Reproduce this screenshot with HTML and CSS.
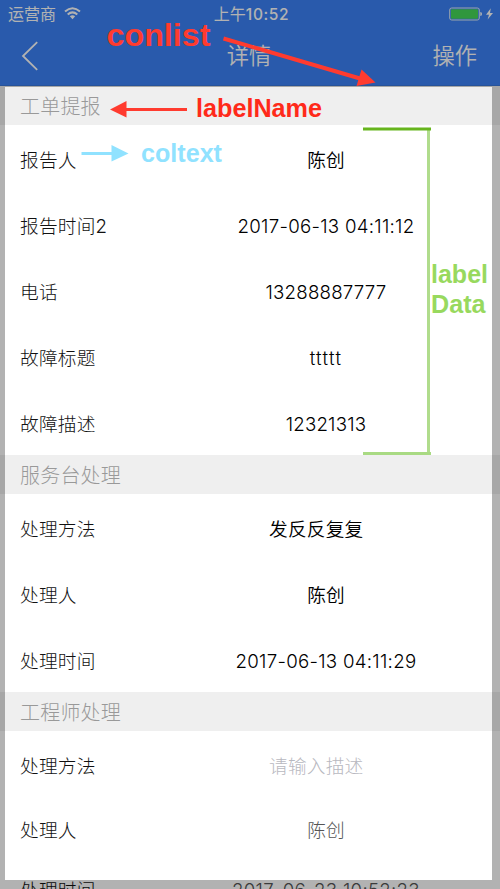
FILE: index.html
```html
<!DOCTYPE html>
<html lang="zh-CN">
<head>
<meta charset="utf-8">
<title>详情</title>
<link rel="stylesheet" href="styles.css">
</head>
<body>
<div class="screen">
  <header class="header">
    <div class="status">
      <div class="carrier"><span>运营商</span>
        <svg width="17" height="13" viewBox="0 0 17 13" fill="none" stroke="#fff" stroke-width="2"><path d="M1 4.6Q8.5-2 16 4.6M3.7 7.5Q8.5 3.2 13.3 7.5"/><path d="M5.8 9.3Q8.5 7.2 11.2 9.3L8.5 12.3Z" fill="#fff" stroke="none"/></svg>
      </div>
      <div class="clock">上午<span>10:52</span></div>
      <svg class="battery" width="46" height="14" viewBox="0 0 46 14"><rect x=".7" y="1" width="29.6" height="12" rx="2" fill="none" stroke="#e0edf8" stroke-width="1"/><rect x="2" y="2.2" width="27" height="9.6" rx=".8" fill="#45d958"/><path d="M31.3 5Q33 5.2 33 7T31.3 9Z" fill="#fff"/><path d="M41.8 1.3L37 7.7H40L38.6 12.5L44 6H41Z" fill="#fff"/></svg>
    </div>
    <nav class="nav">
      <svg class="back" width="18" height="30" viewBox="0 0 18 30" fill="none" stroke="#fff" stroke-width="1.8"><path d="M16.2 1.2L2 15L16.2 28.8"/></svg>
      <h1>详情</h1>
      <span class="action">操作</span>
    </nav>
  </header>
  <main>
    <section class="report">
      <h2>工单提报</h2>
      <div class="row"><span>报告人</span><b>陈创</b></div>
      <div class="row"><span>报告时间2</span><b class="date">2017-06-13 04:11:12</b></div>
      <div class="row"><span>电话</span><b class="phone">13288887777</b></div>
      <div class="row"><span>故障标题</span><b class="fault">ttttt</b></div>
      <div class="row"><span>故障描述</span><b class="desc">12321313</b></div>
    </section>
    <section class="desk">
      <h2>服务台处理</h2>
      <div class="row"><span>处理方法</span><b class="method">发反反复复</b></div>
      <div class="row"><span>处理人</span><b>陈创</b></div>
      <div class="row"><span>处理时间</span><b class="date">2017-06-13 04:11:29</b></div>
    </section>
    <section class="engineer">
      <h2>工程师处理</h2>
      <div class="row"><span>处理方法</span><b class="method placeholder">请输入描述</b></div>
      <div class="row"><span>处理人</span><b class="readonly">陈创</b></div>
      <div class="row last"><span>处理时间</span><b class="readonly date">2017-06-23 10:52:23</b></div>
    </section>
  </main>
  <div class="spotlight"></div>
  <svg class="notes" width="500" height="889" viewBox="0 0 500 889">
    <g fill="#ff3b2f" stroke="none">
      <path d="M223.5 38.5L360 78.5" stroke="#ff3b2f" stroke-width="4"/><path d="M361.5 69.5L375.5 82.5L356.5 86Z"/>
      <path d="M124 109.5H187" stroke="#ff3b2f" stroke-width="3"/><path d="M110 109.5L126.5 101V117.5Z"/>
      <text x="106.5" y="46" font-size="32" textLength="104" lengthAdjust="spacingAndGlyphs">conlist</text>
    </g>
    <text x="196" y="116.5" font-size="25" fill="#ff2a1a" textLength="126" lengthAdjust="spacingAndGlyphs">labelName</text>
    <g fill="#90e2ff"><path d="M81.5 153.5H113" stroke="#90e2ff" stroke-width="3"/><path d="M128.5 153.5L111.5 145V161.5Z"/><text x="141" y="162" font-size="25" textLength="81" lengthAdjust="spacingAndGlyphs">coltext</text></g>
    <path d="M428.5 128V453" stroke="#b0dc8c" stroke-width="3"/>
    <path d="M363 129H431" stroke="#67b51e" stroke-width="3"/>
    <path d="M363 453.5H431" stroke="#a9da83" stroke-width="3"/>
    <g fill="#98d95e" font-size="25"><text x="431" y="282.5" textLength="57" lengthAdjust="spacingAndGlyphs">label</text><text x="431" y="312.5" textLength="54.5" lengthAdjust="spacingAndGlyphs">Data</text></g>
  </svg>
</div>
</body>
</html>
```
FILE: styles.css
```css
* { box-sizing: border-box; }
body { margin: 0; background: #fff; font-family: Inter, "Noto Sans CJK SC", sans-serif; }
.screen { position: relative; width: 500px; height: 889px; overflow: hidden; }
.header { height: 86px; background: #3b82f6; border-bottom: 1px solid #3977dc; color: #fff; }
.status { display: grid; grid-template-columns: 1fr auto 1fr; align-items: center; height: 27px; padding: 0 5px 0 8px; font-size: 16px; }
.carrier { display: flex; align-items: center; gap: 8px; line-height: 22px; }
.carrier span { padding-top: 1px; }
.clock { padding-top: 1px; font-size: 16px; line-height: 22px; }
.clock span { font-size: 15.5px; font-weight: 500; letter-spacing: .6px; }
.battery { justify-self: end; }
.nav { display: grid; grid-template-columns: 1fr auto 1fr; align-items: center; height: 57px; padding: 0 23px 0 21px; }
.nav h1, .action { margin: 0; padding-top: 1px; font-size: 22.3px; font-weight: 350; line-height: 30px; }
.action { justify-self: end; }
h2 { height: 39px; margin: 0; padding: 1.5px 0 0 20px; background: #efefef; color: #999; font-size: 20px; font-weight: 300; line-height: 39px; letter-spacing: .2px; }
.report { height: 369px; }
.desk { height: 237px; }
.row { display: grid; grid-template-columns: 160px 332px; align-items: center; height: 66px; padding-top: 5px; font-size: 18.7px; line-height: 28px; color: #111; }
.row span { padding: 0 0 0 20px; font-weight: 300; letter-spacing: .2px; }
.row b { text-align: center; font-weight: 350; color: #000; }
.row .date { letter-spacing: .27px; }
.row .phone, .row .desc { letter-spacing: .2px; }
.row .fault { letter-spacing: 1.3px; }
.row .method { padding-left: 109px; text-align: left; letter-spacing: .2px; }
.row .placeholder { color: #b8b8c0; font-weight: 300; }
.row .readonly { color: #555; font-weight: 300; }
.engineer .row { height: 64px; padding-top: 7px; }
.engineer .last { height: 60px; padding-top: 4px; }
.spotlight { position: absolute; left: 5px; top: 87px; width: 487px; height: 793px; box-shadow: 0 0 0 900px rgba(0, 0, 0, .3); }
.notes { position: absolute; left: 0; top: 0; font-family: "Liberation Sans", sans-serif; font-weight: 700; }
```
